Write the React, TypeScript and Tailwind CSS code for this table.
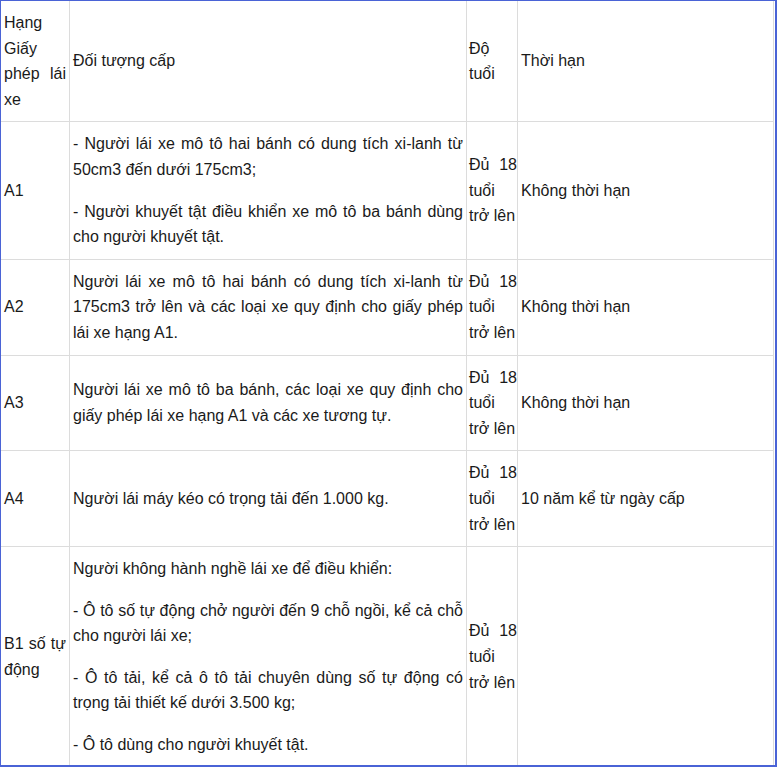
import React from "react";

type Row = {
  hang: string;
  doiTuong: string[];
  tuoi: string;
  thoiHan: string;
};

const rows: Row[] = [
  {
    hang: "A1",
    doiTuong: [
      "- Người lái xe mô tô hai bánh có dung tích xi-lanh từ 50cm3 đến dưới 175cm3;",
      "- Người khuyết tật điều khiển xe mô tô ba bánh dùng cho người khuyết tật.",
    ],
    tuoi: "Đủ 18 tuổi trở lên",
    thoiHan: "Không thời hạn",
  },
  {
    hang: "A2",
    doiTuong: [
      "Người lái xe mô tô hai bánh có dung tích xi-lanh từ 175cm3 trở lên và các loại xe quy định cho giấy phép lái xe hạng A1.",
    ],
    tuoi: "Đủ 18 tuổi trở lên",
    thoiHan: "Không thời hạn",
  },
  {
    hang: "A3",
    doiTuong: [
      "Người lái xe mô tô ba bánh, các loại xe quy định cho giấy phép lái xe hạng A1 và các xe tương tự.",
    ],
    tuoi: "Đủ 18 tuổi trở lên",
    thoiHan: "Không thời hạn",
  },
  {
    hang: "A4",
    doiTuong: ["Người lái máy kéo có trọng tải đến 1.000 kg."],
    tuoi: "Đủ 18 tuổi trở lên",
    thoiHan: "10 năm kể từ ngày cấp",
  },
  {
    hang: "B1 số tự động",
    doiTuong: [
      "Người không hành nghề lái xe để điều khiển:",
      "- Ô tô số tự động chở người đến 9 chỗ ngồi, kể cả chỗ cho người lái xe;",
      "- Ô tô tải, kể cả ô tô tải chuyên dùng số tự động có trọng tải thiết kế dưới 3.500 kg;",
      "- Ô tô dùng cho người khuyết tật.",
    ],
    tuoi: "Đủ 18 tuổi trở lên",
    thoiHan: "",
  },
];

const cell =
  "border border-[#dcdcdc] px-[3px] py-[9px] align-middle text-justify";
// narrow age column: no right padding so "trở lên" stays on one line
const ageCell =
  "border border-[#dcdcdc] pl-[2px] pr-0 py-[9px] align-middle text-justify";

export default function App() {
  return (
    <div
      className="w-[777px] h-[767px] overflow-hidden bg-white border-t border-l border-r-2 border-b-2 border-[#4a63d6] text-[16px] leading-[1.6] text-[#1a1a1a]"
      style={{ fontFamily: '"Liberation Sans", Arial, sans-serif' }}
    >
      <table className="w-[774px] table-fixed border-collapse -mt-px -ml-px">
        <colgroup>
          <col className="w-[69px]" />
          <col className="w-[397px]" />
          <col className="w-[51px]" />
          <col />
        </colgroup>
        <tbody>
          {/* header */}
          <tr>
            <td className={cell}>Hạng Giấy phép lái xe</td>
            <td className={cell}>Đối tượng cấp</td>
            <td className={ageCell}>Độ tuổi</td>
            <td className={cell}>Thời hạn</td>
          </tr>
          {rows.map((r) => (
            <tr key={r.hang}>
              <td className={cell}>{r.hang}</td>
              <td className={cell}>
                {r.doiTuong.map((p, i) => (
                  <p key={i} className={i > 0 ? "mt-4" : ""}>
                    {p}
                  </p>
                ))}
              </td>
              <td className={ageCell}>{r.tuoi}</td>
              <td className={cell}>{r.thoiHan}</td>
            </tr>
          ))}
        </tbody>
      </table>
    </div>
  );
}
